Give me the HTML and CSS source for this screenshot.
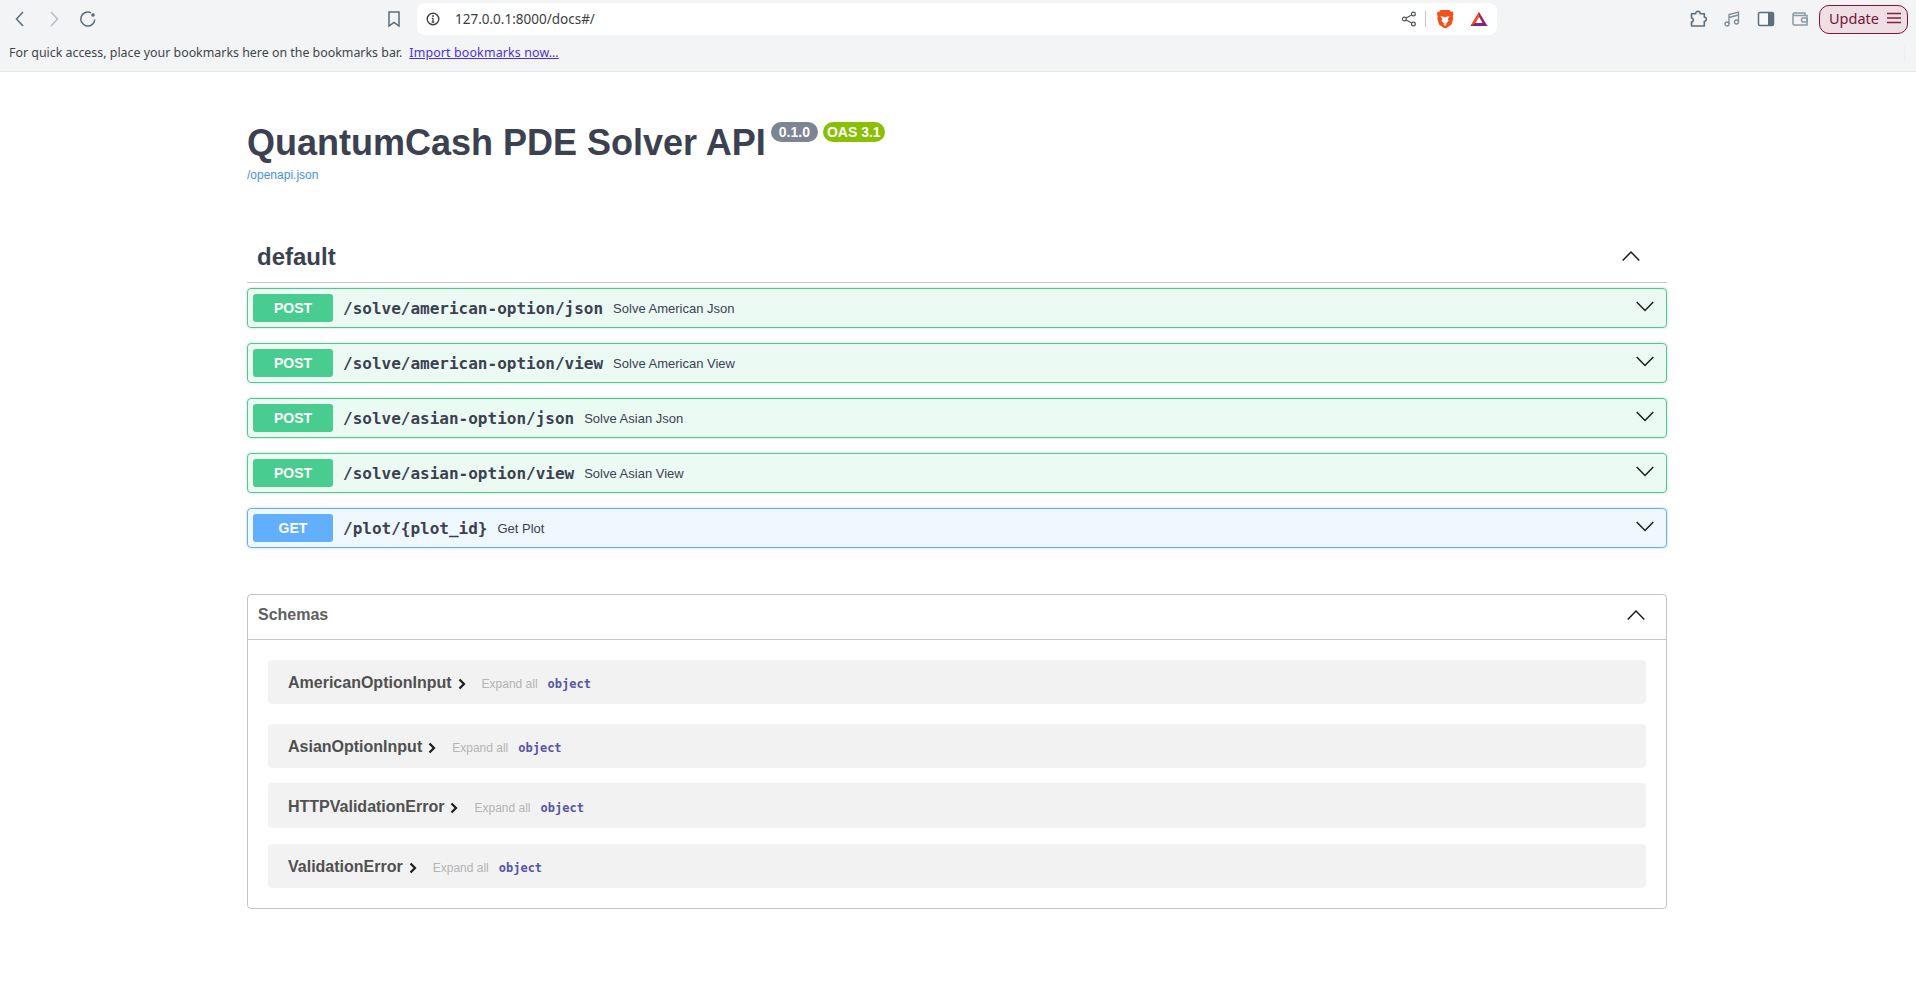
FILE: index.html
```html
<!DOCTYPE html>
<html lang="en">
<head>
  <meta charset="UTF-8">
  <title>QuantumCash PDE Solver API - Swagger UI</title>
  <link rel="stylesheet" href="styles.css">
</head>
<body>
  <!-- browser chrome -->
  <header class="chrome">
    <div class="toolbar">
      <div class="nav-buttons">
        <span class="tool"><svg width="16" height="16" viewBox="0 0 16 16"><path d="M11 1 4.500 8l6.500 7" class="ic"/></svg></span>
        <span class="tool dim"><svg width="16" height="16" viewBox="0 0 16 16"><path d="m5 1 6.500 7L5 15" class="ic"/></svg></span>
        <span class="tool"><svg width="18" height="18" viewBox="0 0 18 18"><path d="M15.800 9.500A7 7 0 1 1 12 2.800" class="ic"/><circle cx="14" cy="5" r="1.800" fill="#5a6c7a"/></svg></span>
      </div>
      <span class="tool bookmark-btn"><svg width="16" height="18" viewBox="0 0 16 18"><path d="M3 2h10v14l-5-3.600L3 16z" class="ic"/></svg></span>
      <div class="omnibox">
        <svg class="info-icon" width="14" height="14" viewBox="0 0 14 14"><circle cx="7" cy="7" r="5.800" fill="none" stroke="#3c4043" stroke-width="1.400"/><path d="M7 6.200v4M5.800 6.400H7M5.600 10.200h2.800" stroke="#3c4043" stroke-width="1.200" fill="none"/><circle cx="7" cy="4" r=".9" fill="#3c4043"/></svg>
        <span class="url">127.0.0.1:8000/docs#/</span>
        <svg class="share-icon" width="16" height="16" viewBox="0 0 16 16"><g fill="none" stroke="#50565e" stroke-width="1.200"><circle cx="3.400" cy="8" r="1.900"/><circle cx="12.400" cy="3" r="1.900"/><circle cx="12.400" cy="13" r="1.900"/><path d="m5.100 7 5.600-3.100M5.100 9l5.600 3.100"/></g></svg>
        <span class="omni-sep"></span>
        <svg class="brave-icon" width="18" height="20" viewBox="0 0 18 20"><path d="M4.500 1h9l1.500 1.700 1.900-.2.600 2.500-.7 2.200.5 2-1.800 6.300-4.200 3L9 19.500l-1.800-1-4.200-3L1.200 9.200l.5-2L1 5l.6-2.500 1.900.2z" fill="#f1511b"/><path d="M4.500 7.200 7.600 7.800 9 8.600l1.400-.8 3.100-.6-1.800 3 1 1.300-2.500 3.200H8l-2.500-3.200 1-1.300z" fill="#fff"/><path d="M7.200 15.200h3.600L9 17z" fill="#fff"/></svg>
        <svg class="bat-icon" width="18" height="16" viewBox="0 0 20 18"><path d="M10 1 19.500 17H.5z" fill="#9e1f63"/><path d="M10 1 .5 17l4.500-2.700L10 5.800z" fill="#ff5000"/><path d="M.5 17h19L15 14.300H5z" fill="#662d91"/><path d="M10 6.500 14 13.500H6z" fill="#fff"/></svg>
      </div>
      <div class="toolbar-right">
        <span class="tool"><svg width="18" height="18" viewBox="-1.500 0 18 18"><path d="M1 3.800h4.200c-.5-3.200 5-3.200 4.500 0h4.100v3.500c2.700-.5 2.700 4.500 0 4V16H1v-4c2.300.3 2.300-4.300 0-4z" fill="none" stroke="#5d6f7c" stroke-width="1.600" stroke-linejoin="round"/></svg></span>
        <span class="tool"><svg width="18" height="18" viewBox="0 0 18 18"><g fill="none" stroke="#7d8d99" stroke-width="1.300"><circle cx="4" cy="14" r="2"/><circle cx="13.500" cy="12" r="2"/><path d="M6 14V4.500L15.500 2v10M6 7.500l9.500-2.500"/></g></svg></span>
        <span class="tool"><svg width="18" height="18" viewBox="0 0 18 18"><rect x="1.500" y="2.500" width="15" height="13" rx="1.500" fill="#f8f9fa" stroke="#5d6f7c" stroke-width="1.500"/><rect x="11" y="3" width="5" height="12" fill="#5d6f7c"/></svg></span>
        <span class="tool"><svg width="18" height="18" viewBox="0 0 18 18"><g fill="none" stroke="#8a99a4" stroke-width="1.500"><path d="M3 3h11v2.500M2 5.500h14V15H3.500A1.500 1.500 0 0 1 2 13.500V4.500A1.500 1.500 0 0 1 3 3"/><rect x="10.500" y="8" width="5.500" height="4" rx="1.500"/></g></svg></span>
        <span class="update-btn">Update
          <svg width="14" height="12" viewBox="0 0 14 12"><path d="M0 1.500h14M0 6h14M0 10.500h14" stroke="#8c1b3f" stroke-width="1.300" fill="none"/></svg>
        </span>
      </div>
    </div>
    <div class="bookmarks-bar">
      <span>For quick access, place your bookmarks here on the bookmarks bar.</span>
      <a class="import-link" href="#">Import bookmarks now…</a>
      <span class="bar-sep"></span>
    </div>
  </header>

  <!-- swagger page -->
  <main class="wrapper">
    <section class="info">
      <div class="title-row">
        <h1 class="title">QuantumCash PDE Solver API</h1>
        <span class="stamp stamp-version">0.1.0</span>
        <span class="stamp stamp-oas">OAS 3.1</span>
      </div>
      <a class="spec-link" href="#">/openapi.json</a>
    </section>

    <section class="tag-section">
      <div class="tag-head">
        <h3 class="tag-name">default</h3>
        <svg class="chev tag-chev" width="20" height="20" viewBox="0 0 20 20"><path d="M1.700 14.500 10 6l8.300 8.500" class="chev-line"/></svg>
      </div>

      <div class="opblock post">
        <span class="method">POST</span>
        <span class="path">/solve/american-option/json</span>
        <span class="summary">Solve American Json</span>
        <svg class="chev op-chev" width="20" height="20" viewBox="0 0 20 20"><path d="M1.700 6 10 14.500 18.300 6" class="chev-line"/></svg>
      </div>
      <div class="opblock post">
        <span class="method">POST</span>
        <span class="path">/solve/american-option/view</span>
        <span class="summary">Solve American View</span>
        <svg class="chev op-chev" width="20" height="20" viewBox="0 0 20 20"><path d="M1.700 6 10 14.500 18.300 6" class="chev-line"/></svg>
      </div>
      <div class="opblock post">
        <span class="method">POST</span>
        <span class="path">/solve/asian-option/json</span>
        <span class="summary">Solve Asian Json</span>
        <svg class="chev op-chev" width="20" height="20" viewBox="0 0 20 20"><path d="M1.700 6 10 14.500 18.300 6" class="chev-line"/></svg>
      </div>
      <div class="opblock post">
        <span class="method">POST</span>
        <span class="path">/solve/asian-option/view</span>
        <span class="summary">Solve Asian View</span>
        <svg class="chev op-chev" width="20" height="20" viewBox="0 0 20 20"><path d="M1.700 6 10 14.500 18.300 6" class="chev-line"/></svg>
      </div>
      <div class="opblock get">
        <span class="method">GET</span>
        <span class="path">/plot/{plot_id}</span>
        <span class="summary">Get Plot</span>
        <svg class="chev op-chev" width="20" height="20" viewBox="0 0 20 20"><path d="M1.700 6 10 14.500 18.300 6" class="chev-line"/></svg>
      </div>
    </section>

    <section class="models">
      <div class="models-head">
        <h4 class="models-title">Schemas</h4>
        <svg class="chev models-chev" width="20" height="20" viewBox="0 0 20 20"><path d="M1.700 14.500 10 6l8.300 8.500" class="chev-line"/></svg>
      </div>
      <div class="models-body">
        <div class="model-row">
          <span class="model-name">AmericanOptionInput</span>
          <svg class="model-arrow" width="12" height="14" viewBox="0 0 12 14"><path d="m3.500 2.500 4.500 4.500-4.500 4.500" class="arrow-line"/></svg>
          <span class="expand">Expand all</span>
          <span class="type">object</span>
        </div>
        <div class="model-row second">
          <span class="model-name">AsianOptionInput</span>
          <svg class="model-arrow" width="12" height="14" viewBox="0 0 12 14"><path d="m3.500 2.500 4.500 4.500-4.500 4.500" class="arrow-line"/></svg>
          <span class="expand">Expand all</span>
          <span class="type">object</span>
        </div>
        <div class="model-row third">
          <span class="model-name">HTTPValidationError</span>
          <svg class="model-arrow" width="12" height="14" viewBox="0 0 12 14"><path d="m3.500 2.500 4.500 4.500-4.500 4.500" class="arrow-line"/></svg>
          <span class="expand">Expand all</span>
          <span class="type">object</span>
        </div>
        <div class="model-row">
          <span class="model-name">ValidationError</span>
          <svg class="model-arrow" width="12" height="14" viewBox="0 0 12 14"><path d="m3.500 2.500 4.500 4.500-4.500 4.500" class="arrow-line"/></svg>
          <span class="expand">Expand all</span>
          <span class="type">object</span>
        </div>
      </div>
    </section>
  </main>
</body>
</html>
```

FILE: styles.css
```css
body {
  margin: 0;
  background-color: #ffffff;
  font-family: "Liberation Sans", Arial, sans-serif;
  color: #3b4151;
}

/* browser chrome */
.chrome {
  background-color: #f3f4f6;
  border-bottom: 1px solid #e6e7ea;
  height: 71px;
}
.toolbar {
  display: flex;
  align-items: center;
  height: 38px;
  box-sizing: border-box;
  padding: 3px 8px 3px 3px;
}
.nav-buttons {
  display: flex;
}
.tool {
  display: flex;
  align-items: center;
  justify-content: center;
  width: 34px;
  height: 32px;
  flex: none;
}
.tool.dim {
  opacity: 0.4;
}
.ic {
  fill: none;
  stroke: #5a6c7a;
  stroke-width: 1.5;
}
.bookmark-btn {
  margin-left: 272px;
  margin-right: 6px;
}
.omnibox {
  display: flex;
  align-items: center;
  width: 1080px;
  height: 32px;
  flex: none;
  box-sizing: border-box;
  padding: 0 9px 0 9px;
  background-color: #ffffff;
  border-radius: 8px;
}
.url {
  margin-left: 15px;
  font-family: "Noto Sans", sans-serif;
  font-size: 13.5px;
  color: #3c4043;
}
.share-icon {
  margin-left: auto;
}
.omni-sep {
  width: 1px;
  height: 16px;
  margin: 0 10px 0 8px;
  background-color: #c4c7cc;
}
.brave-icon {
  margin-right: 16px;
}
.toolbar-right {
  display: flex;
  align-items: center;
  flex: 1;
  justify-content: flex-end;
}
.update-btn {
  display: flex;
  align-items: center;
  justify-content: space-between;
  width: 89px;
  height: 29px;
  box-sizing: border-box;
  margin-left: 2px;
  padding: 0 6px 2px 9px;
  border: 1px solid #8c0f38;
  border-radius: 10px;
  background-color: #eddfe4;
  color: #7a1238;
  font-family: "Noto Sans", sans-serif;
  font-size: 14.5px;
}
.bookmarks-bar {
  display: flex;
  align-items: center;
  gap: 7px;
  height: 29px;
  padding: 0 11px 4px 9px;
  font-family: "Noto Sans", sans-serif;
  font-size: 12.4px;
  color: #3f4449;
}
.import-link {
  color: #4b2ee6;
  letter-spacing: 0.15px;
}
.bar-sep {
  width: 1px;
  height: 15px;
  margin-left: auto;
  background-color: #eceef0;
}

/* swagger page */
.wrapper {
  width: 1420px;
  margin-left: 247px;
}
.info {
  margin: 50px 0 51px;
}
.title-row {
  display: flex;
  align-items: flex-start;
  height: 41px;
}
.title {
  margin: 0;
  font-size: 36px;
  font-weight: bold;
  line-height: 41px;
}
.stamp {
  height: 20px;
  line-height: 20px;
  border-radius: 57px;
  color: #ffffff;
  font-size: 14px;
  font-weight: bold;
}
.stamp-version {
  margin-left: 5px;
  padding: 0 8px;
  background-color: #7d8492;
}
.stamp-oas {
  margin-left: 5px;
  padding: 0 4px;
  background-color: #89bf04;
}
.spec-link {
  display: block;
  margin-top: 5px;
  font-size: 12px;
  color: #4990e2;
  text-decoration: none;
}
.tag-head {
  display: flex;
  align-items: center;
  justify-content: space-between;
  padding: 10px 26px 11px 10px;
  margin-bottom: 5px;
  border-bottom: 1px solid rgba(59, 65, 81, 0.3);
}
.tag-name {
  margin: 0;
  font-size: 24px;
  font-weight: bold;
}
.chev {
  flex: none;
}
.tag-chev {
  margin-bottom: 3px;
}
.chev-line {
  fill: none;
  stroke: #1c1c1c;
  stroke-width: 1.5;
}
.opblock {
  display: flex;
  align-items: center;
  height: 40px;
  box-sizing: border-box;
  margin-bottom: 15px;
  padding: 0 11px 0 5px;
  border: 1px solid;
  border-radius: 4px;
  box-shadow: 0 0 3px rgba(0, 0, 0, 0.19);
}
.opblock.post {
  background-color: rgba(73, 204, 144, 0.1);
  border-color: #49cc90;
}
.opblock.get {
  background-color: rgba(97, 175, 254, 0.1);
  border-color: #61affe;
}
.method {
  width: 80px;
  height: 28px;
  line-height: 28px;
  flex: none;
  border-radius: 3px;
  color: #ffffff;
  font-size: 14px;
  font-weight: bold;
  text-align: center;
}
.post .method {
  background-color: #49cc90;
}
.get .method {
  background-color: #61affe;
}
.path {
  padding-left: 10px;
  font-family: "DejaVu Sans Mono", monospace;
  font-size: 16px;
  font-weight: bold;
}
.summary {
  padding-left: 10px;
  font-size: 13px;
}
.op-chev {
  margin-left: auto;
  margin-bottom: 5px;
}
.models {
  margin-top: 46px;
  border: 1px solid rgba(59, 65, 81, 0.3);
  border-radius: 4px;
}
.models-head {
  display: flex;
  align-items: center;
  justify-content: space-between;
  height: 44px;
  padding: 0 20px 0 10px;
  border-bottom: 1px solid rgba(59, 65, 81, 0.3);
}
.models-title {
  margin: 0 0 5px;
  font-size: 16px;
  font-weight: bold;
  color: #606060;
}
.models-chev {
  margin-bottom: 5px;
}
.models-body {
  display: flex;
  flex-direction: column;
  gap: 15px;
  padding: 20px;
}
.model-row {
  display: flex;
  align-items: center;
  height: 44px;
  padding-left: 20px;
  border-radius: 4px;
  background-color: rgba(0, 0, 0, 0.05);
}
.model-row.second {
  margin-top: 5px;
}
.model-row.third {
  height: 45px;
  margin-bottom: 1px;
}
.model-name {
  margin-top: 2px;
  font-size: 16px;
  font-weight: bold;
  color: #505050;
}
.model-arrow {
  margin-left: 4px;
  margin-top: 4px;
}
.arrow-line {
  fill: none;
  stroke: #1c1c1c;
  stroke-width: 2.2;
}
.expand {
  margin-left: 14px;
  margin-top: 4px;
  font-size: 12px;
  color: #b4b4b4;
}
.type {
  margin-left: 10px;
  margin-top: 4px;
  font-family: "DejaVu Sans Mono", monospace;
  font-size: 12px;
  font-weight: bold;
  color: #55a;
}
```
